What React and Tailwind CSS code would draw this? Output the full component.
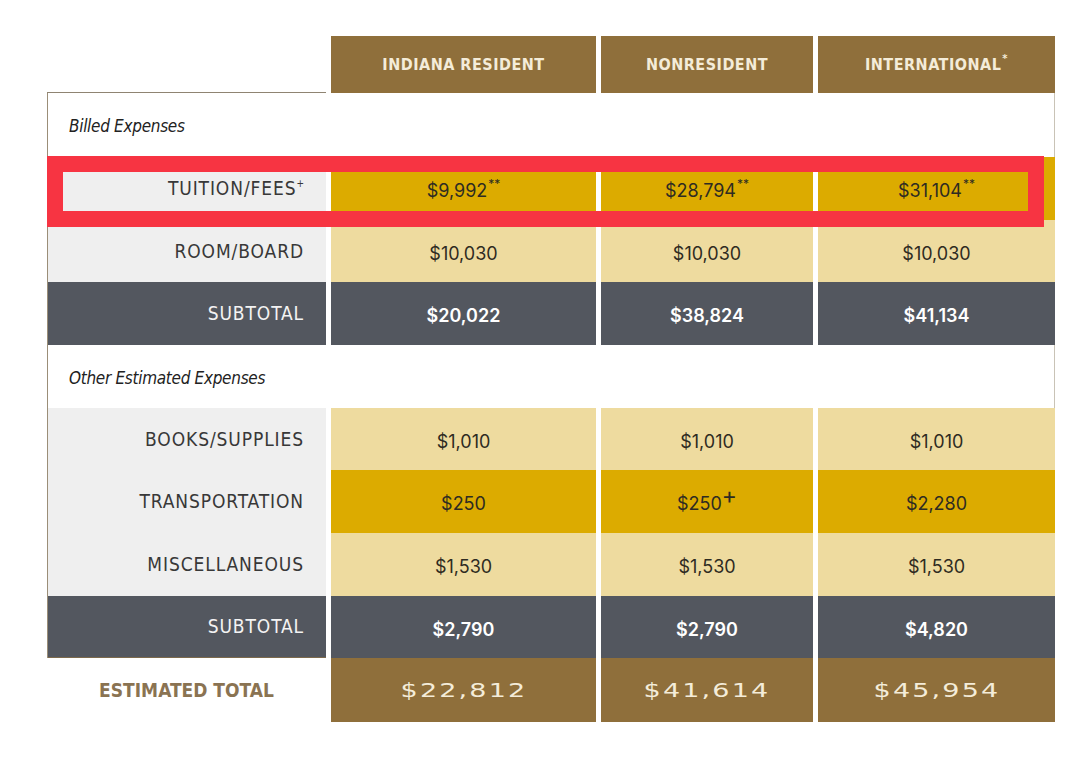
import React from 'react';

const GOLD = 'bg-[#dcab00]';
const TAN = 'bg-[#eedb9f]';

const cols = [
  { key: 'in', title: 'INDIANA RESIDENT' },
  { key: 'non', title: 'NONRESIDENT' },
  { key: 'intl', title: 'INTERNATIONAL', sup: '*' },
];

const rows = [
  { type: 'section', label: 'Billed Expenses', h: 'h-[64px]' },
  { type: 'item', label: 'TUITION/FEES', sup: '+', values: ['$9,992', '$28,794', '$31,104'], vsup: '**', bg: GOLD, h: 'h-[63px]' },
  { type: 'item', label: 'ROOM/BOARD', values: ['$10,030', '$10,030', '$10,030'], bg: TAN, h: 'h-[62px]' },
  { type: 'subtotal', values: ['$20,022', '$38,824', '$41,134'], h: 'h-[63px]' },
  { type: 'section', label: 'Other Estimated Expenses', h: 'h-[63px]' },
  { type: 'item', label: 'BOOKS/SUPPLIES', values: ['$1,010', '$1,010', '$1,010'], bg: TAN, h: 'h-[62px]' },
  { type: 'item', label: 'TRANSPORTATION', values: ['$250', '$250', '$2,280'], plus: 1, bg: GOLD, h: 'h-[63px]' },
  { type: 'item', label: 'MISCELLANEOUS', values: ['$1,530', '$1,530', '$1,530'], bg: TAN, h: 'h-[63px]' },
  { type: 'subtotal', values: ['$2,790', '$2,790', '$4,820'], h: 'h-[62px]', last: true },
];

const totals = ['$22,812', '$41,614', '$45,954'];

const condensed = "font-['DejaVu_Sans_Condensed','DejaVu_Sans',sans-serif] font-stretch-condensed";
const num = "font-['Inter',sans-serif]";

function Row({ row }) {
  if (row.type === 'section') {
    return (
      <div className={`${row.h} flex items-center bg-white border-r border-[#c9c3b6] pl-[21px] pt-[4px]`}>
        <span className={`${condensed} italic text-[17px] tracking-[-0.3px] text-[#222]`}>{row.label}</span>
      </div>
    );
  }

  const sub = row.type === 'subtotal';
  return (
    <div className={`${row.h} grid grid-cols-[278px_265px_212px_237px] gap-x-[5px]`}>
      <div
        className={`flex items-center justify-end pr-[22px] ${
          sub ? 'bg-[#53575f] text-[#f3f3f3]' : 'bg-[#efefef] text-[#383838]'
        } ${row.last ? 'border-b border-[#7d6a4c]' : ''}`}
      >
        <span className={`${condensed} text-[19px] tracking-[0.9px] leading-none`}>
          {sub ? 'SUBTOTAL' : row.label}
          {row.sup && <sup className="text-[10px] relative -top-[8px] tracking-normal">{row.sup}</sup>}
        </span>
      </div>
      {row.values.map((v, i) => (
        <div
          key={i}
          className={`flex items-center justify-center pt-[5px] ${sub ? 'bg-[#53575f] text-white font-semibold' : `${row.bg} text-[#2e2b22]`}`}
        >
          <span className={`${num} text-[18px] leading-none`}>
            {v}
            {row.vsup && <sup className="text-[12px] relative -top-[9px] ml-[1px]">{row.vsup}</sup>}
            {row.plus === i && <sup className="text-[23px] relative -top-[6px]">+</sup>}
          </span>
        </div>
      ))}
    </div>
  );
}

export default function App() {
  return (
    <div className="min-h-screen bg-white pt-[36px]">
      <div className="relative ml-[47px] w-[1008px]">
        {/* Header */}
        <div className="h-[57px] grid grid-cols-[279px_265px_212px_237px] gap-x-[5px]">
          <div className="border-b border-[#8f8472]" />
          {cols.map((c) => (
            <div key={c.key} className="bg-[#8f6f3b] flex items-center justify-center">
              <span className={`${condensed} font-bold text-[16px] text-[#f4ecd9] tracking-[0.5px] leading-none`}>
                {c.title}
                {c.sup && <sup className="text-[11px] relative -top-[8px] ml-[1px]">{c.sup}</sup>}
              </span>
            </div>
          ))}
        </div>

        {/* Body */}
        <div className="border-l border-[#9b8e78]">
          {rows.map((r, i) => (
            <Row key={i} row={r} />
          ))}
        </div>

        {/* Estimated total */}
        <div className="h-[64px] grid grid-cols-[279px_265px_212px_237px] gap-x-[5px]">
          <div className="flex items-center justify-center">
            <span className={`${condensed} font-bold text-[19px] text-[#8a7352]`}>ESTIMATED TOTAL</span>
          </div>
          {totals.map((t) => (
            <div key={t} className="bg-[#8f6f3b] flex items-center justify-center">
              <span className="inline-block font-['DejaVu_Sans',sans-serif] text-[20px] text-[#f4ecd9] tracking-[0.08em] scale-x-[1.35]">
                {t}
              </span>
            </div>
          ))}
        </div>

        {/* highlight box */}
        <div className="absolute left-0 top-[120px] w-[997px] h-[71px] border-[16px] border-[#f73442] pointer-events-none" />
      </div>
    </div>
  );
}
